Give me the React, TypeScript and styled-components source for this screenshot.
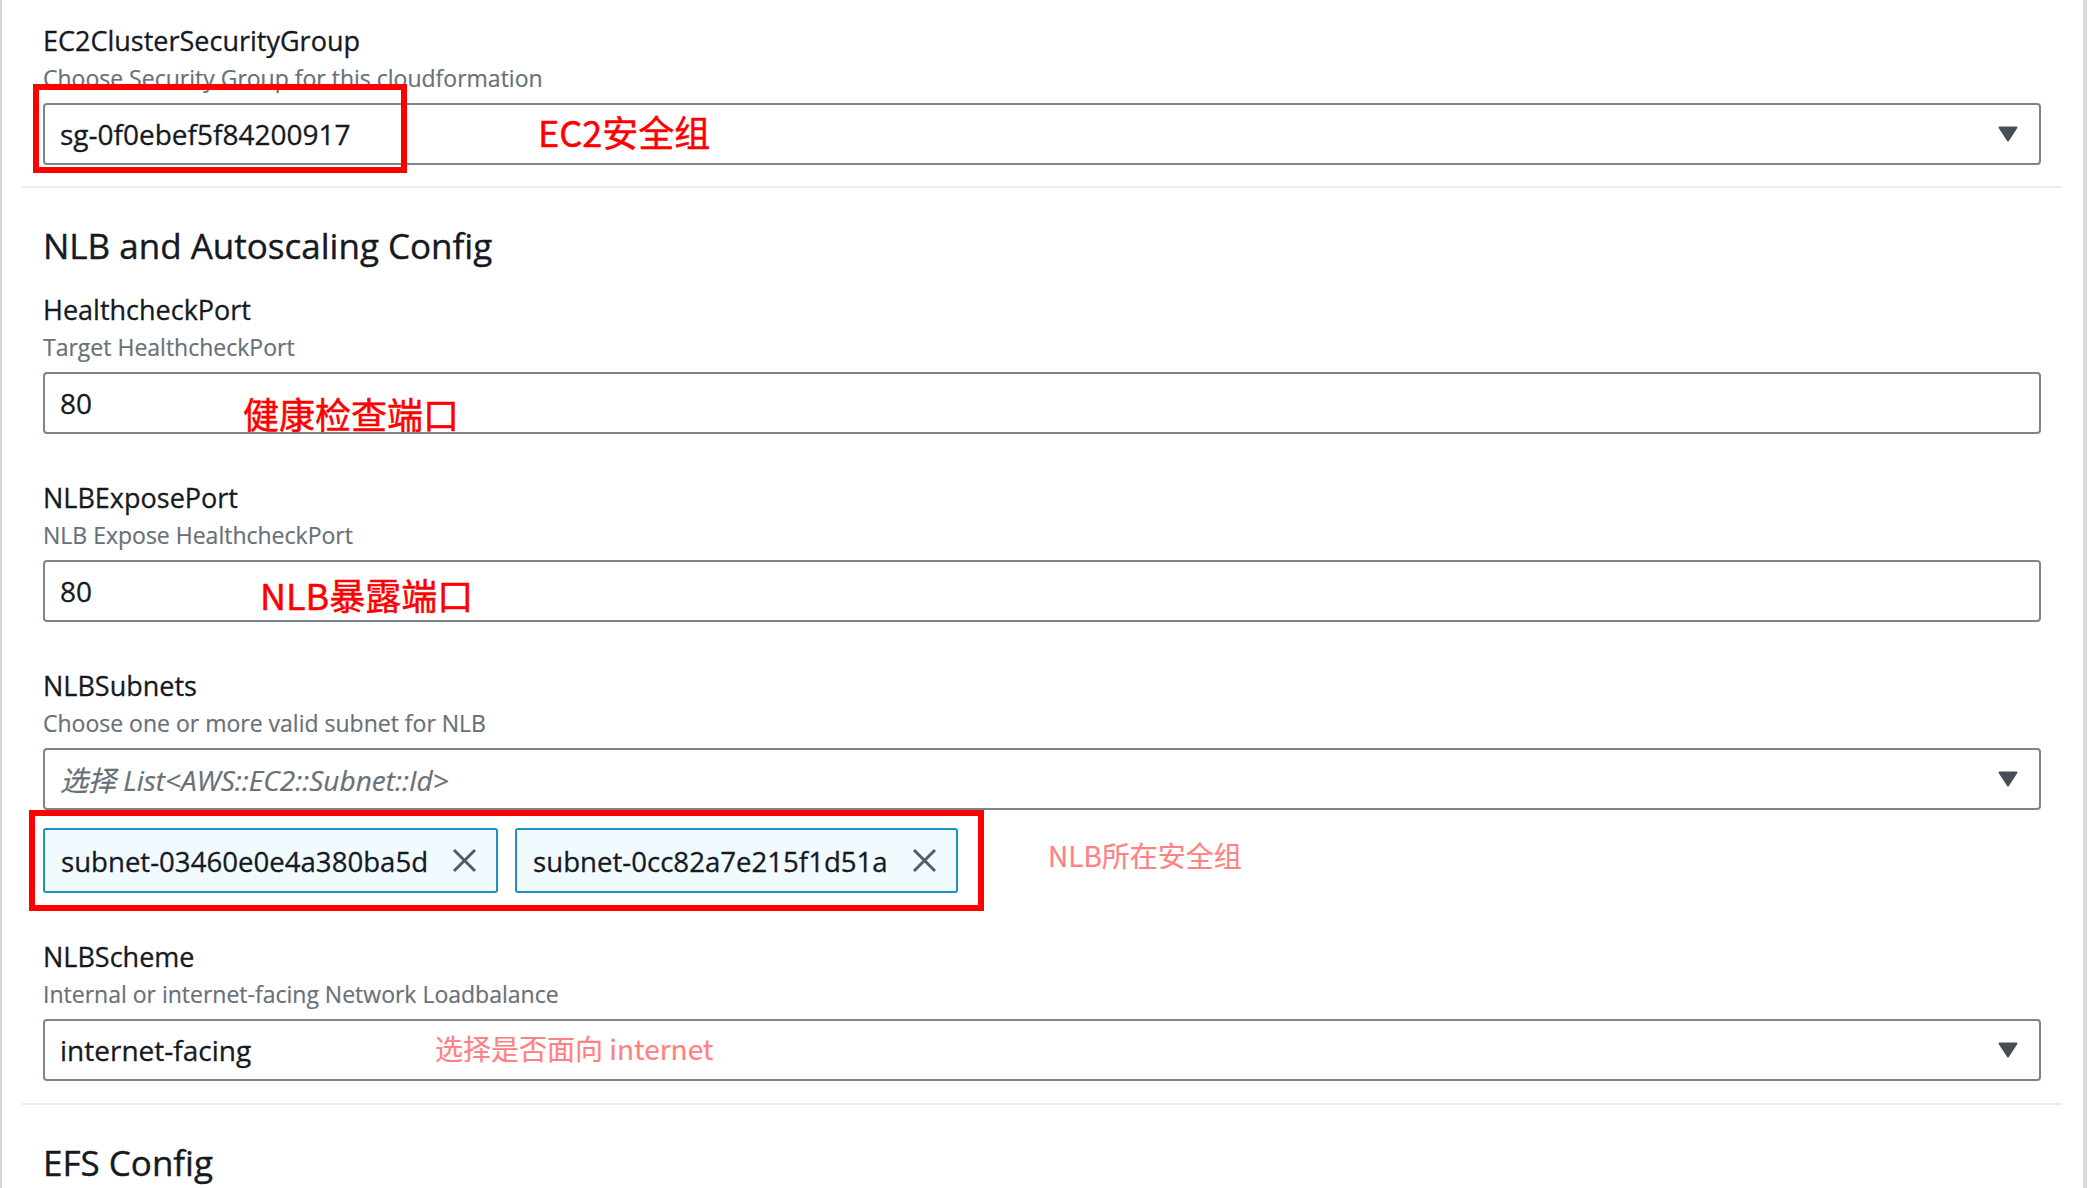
import React from "react";
import styled, { createGlobalStyle } from "styled-components";

const Global = createGlobalStyle`
  html, body {
    margin: 0;
    padding: 0;
    background: #ffffff;
    height: 1188px;
    overflow: hidden;
  }
  body {
    font-family: "Open Sans", "Noto Sans CJK SC", sans-serif;
    color: #16191f;
  }
  * { box-sizing: border-box; }
`;

const Panel = styled.div`
  width: 2087px;
  min-height: 1188px;
  border-left: 2px solid #d2d5d5;
  border-right: 4px solid #d9dcdc;
  padding: 23px 21px 0 20px;
  display: flex;
  flex-direction: column;
`;

const Section = styled.section<{ $top?: number }>`
  display: flex;
  flex-direction: column;
  padding: 0 21px;
  margin-top: ${(p) => p.$top ?? 0}px;
  gap: 46px;
`;

const Heading = styled.h2`
  margin: 0 0 -22px 0;
  font-size: 35px;
  line-height: 44px;
  font-weight: 400;
  color: #16191f;
  -webkit-text-stroke: 0.4px #16191f;
`;

const Divider = styled.hr<{ $top: number }>`
  margin: ${(p) => p.$top}px 0 0 0;
  border: none;
  height: 2px;
  background: #eaeded;
`;

const Field = styled.div`
  display: flex;
  flex-direction: column;
`;

const Label = styled.div`
  font-size: 27px;
  line-height: 36px;
  font-weight: 400;
  color: #16191f;
  -webkit-text-stroke: 0.3px #16191f;
`;

const Desc = styled.div`
  margin-top: 4px;
  font-size: 23px;
  line-height: 30px;
  color: #687078;
  -webkit-text-stroke: 0.2px #687078;
`;

const Box = styled.div`
  position: relative;
  margin-top: 10px;
  height: 62px;
  border: 2px solid #79868b;
  border-radius: 4px;
  background: #ffffff;
  display: flex;
  align-items: center;
  padding: 0 21px 0 15px;
  font-size: 28px;
  color: #16191f;
`;

const Value = styled.span`
  flex: 1;
  white-space: nowrap;
  -webkit-text-stroke: 0.3px #16191f;
`;

const Placeholder = styled.span`
  flex: 1;
  font-style: italic;
  color: #687078;
  white-space: nowrap;
  -webkit-text-stroke: 0.2px #687078;
`;

const Caret = styled.svg`
  width: 20px;
  height: 16px;
  flex: none;
`;

const TokenRow = styled.div`
  position: relative;
  margin-top: 18px;
  display: flex;
  gap: 17px;
`;

const Token = styled.div`
  height: 65px;
  border: 2px solid #1a93c4;
  border-radius: 3px;
  background: #f1faff;
  display: flex;
  align-items: center;
  gap: 24px;
  padding: 0 19px 0 16px;
  font-size: 27.6px;
  color: #16191f;
  white-space: nowrap;
  -webkit-text-stroke: 0.3px #16191f;
`;

const Dismiss = styled.svg`
  width: 25px;
  height: 25px;
  flex: none;
`;

const Frame = styled.div<{ $l: number; $t: number; $w: number; $h: number }>`
  position: absolute;
  left: ${(p) => p.$l}px;
  top: ${(p) => p.$t}px;
  width: ${(p) => p.$w}px;
  height: ${(p) => p.$h}px;
  border: 6px solid #ff0000;
  pointer-events: none;
`;

const Note = styled.span<{ $l: number; $t: number; $size: number; $soft?: boolean }>`
  position: absolute;
  left: ${(p) => p.$l}px;
  top: ${(p) => p.$t}px;
  font-family: "Noto Sans CJK SC", "Open Sans", sans-serif;
  font-size: ${(p) => p.$size}px;
  font-weight: 400;
  line-height: 1;
  color: ${(p) => (p.$soft ? "#ff8282" : "#ff0000")};
  -webkit-text-stroke: ${(p) => (p.$soft ? "0.2px #ff8282" : "0.5px #ff0000")};
  white-space: nowrap;
`;

const CaretIcon = () => (
  <Caret viewBox="0 0 20 16">
    <path d="M1.5 1.5 H18.5 L10 14.5 Z" fill="#484e57" stroke="#484e57" strokeWidth="2" strokeLinejoin="round" />
  </Caret>
);

const XIcon = () => (
  <Dismiss viewBox="0 0 25 25">
    <path d="M2 2 L23 23 M23 2 L2 23" stroke="#545b64" strokeWidth="3" fill="none" />
  </Dismiss>
);

export default function App() {
  return (
    <>
      <Global />
      <Panel>
        <Section>
          <Field>
            <Label>EC2ClusterSecurityGroup</Label>
            <Desc>Choose Security Group for this cloudformation</Desc>
            <Box>
              <Value>sg-0f0ebef5f84200917</Value>
              <CaretIcon />
              <Frame $l={-12} $t={-21} $w={374} $h={89} />
              <Note $l={493} $t={8} $size={36}>EC2安全组</Note>
            </Box>
          </Field>
        </Section>
        <Divider $top={21} />
        <Section $top={36}>
          <Heading>NLB and Autoscaling Config</Heading>
          <Field>
            <Label>HealthcheckPort</Label>
            <Desc>Target HealthcheckPort</Desc>
            <Box>
              <Value>80</Value>
              <Note $l={198} $t={21} $size={36}>健康检查端口</Note>
            </Box>
          </Field>
          <Field>
            <Label>NLBExposePort</Label>
            <Desc>NLB Expose HealthcheckPort</Desc>
            <Box>
              <Value>80</Value>
              <Note $l={215} $t={14} $size={36}>NLB暴露端口</Note>
            </Box>
          </Field>
          <Field>
            <Label>NLBSubnets</Label>
            <Desc>Choose one or more valid subnet for NLB</Desc>
            <Box>
              <Placeholder>选择 List&lt;AWS::EC2::Subnet::Id&gt;</Placeholder>
              <CaretIcon />
            </Box>
            <TokenRow>
              <Token>
                subnet-03460e0e4a380ba5d
                <XIcon />
              </Token>
              <Token>
                subnet-0cc82a7e215f1d51a
                <XIcon />
              </Token>
              <Frame $l={-14} $t={-18} $w={955} $h={101} />
              <Note $l={1005} $t={13} $size={28} $soft>NLB所在安全组</Note>
            </TokenRow>
          </Field>
          <Field>
            <Label>NLBScheme</Label>
            <Desc>Internal or internet-facing Network Loadbalance</Desc>
            <Box>
              <Value>internet-facing</Value>
              <CaretIcon />
              <Note $l={390} $t={13} $size={28} $soft>选择是否面向 internet</Note>
            </Box>
          </Field>
        </Section>
        <Divider $top={22} />
        <Section $top={36}>
          <Heading>EFS Config</Heading>
        </Section>
      </Panel>
    </>
  );
}
